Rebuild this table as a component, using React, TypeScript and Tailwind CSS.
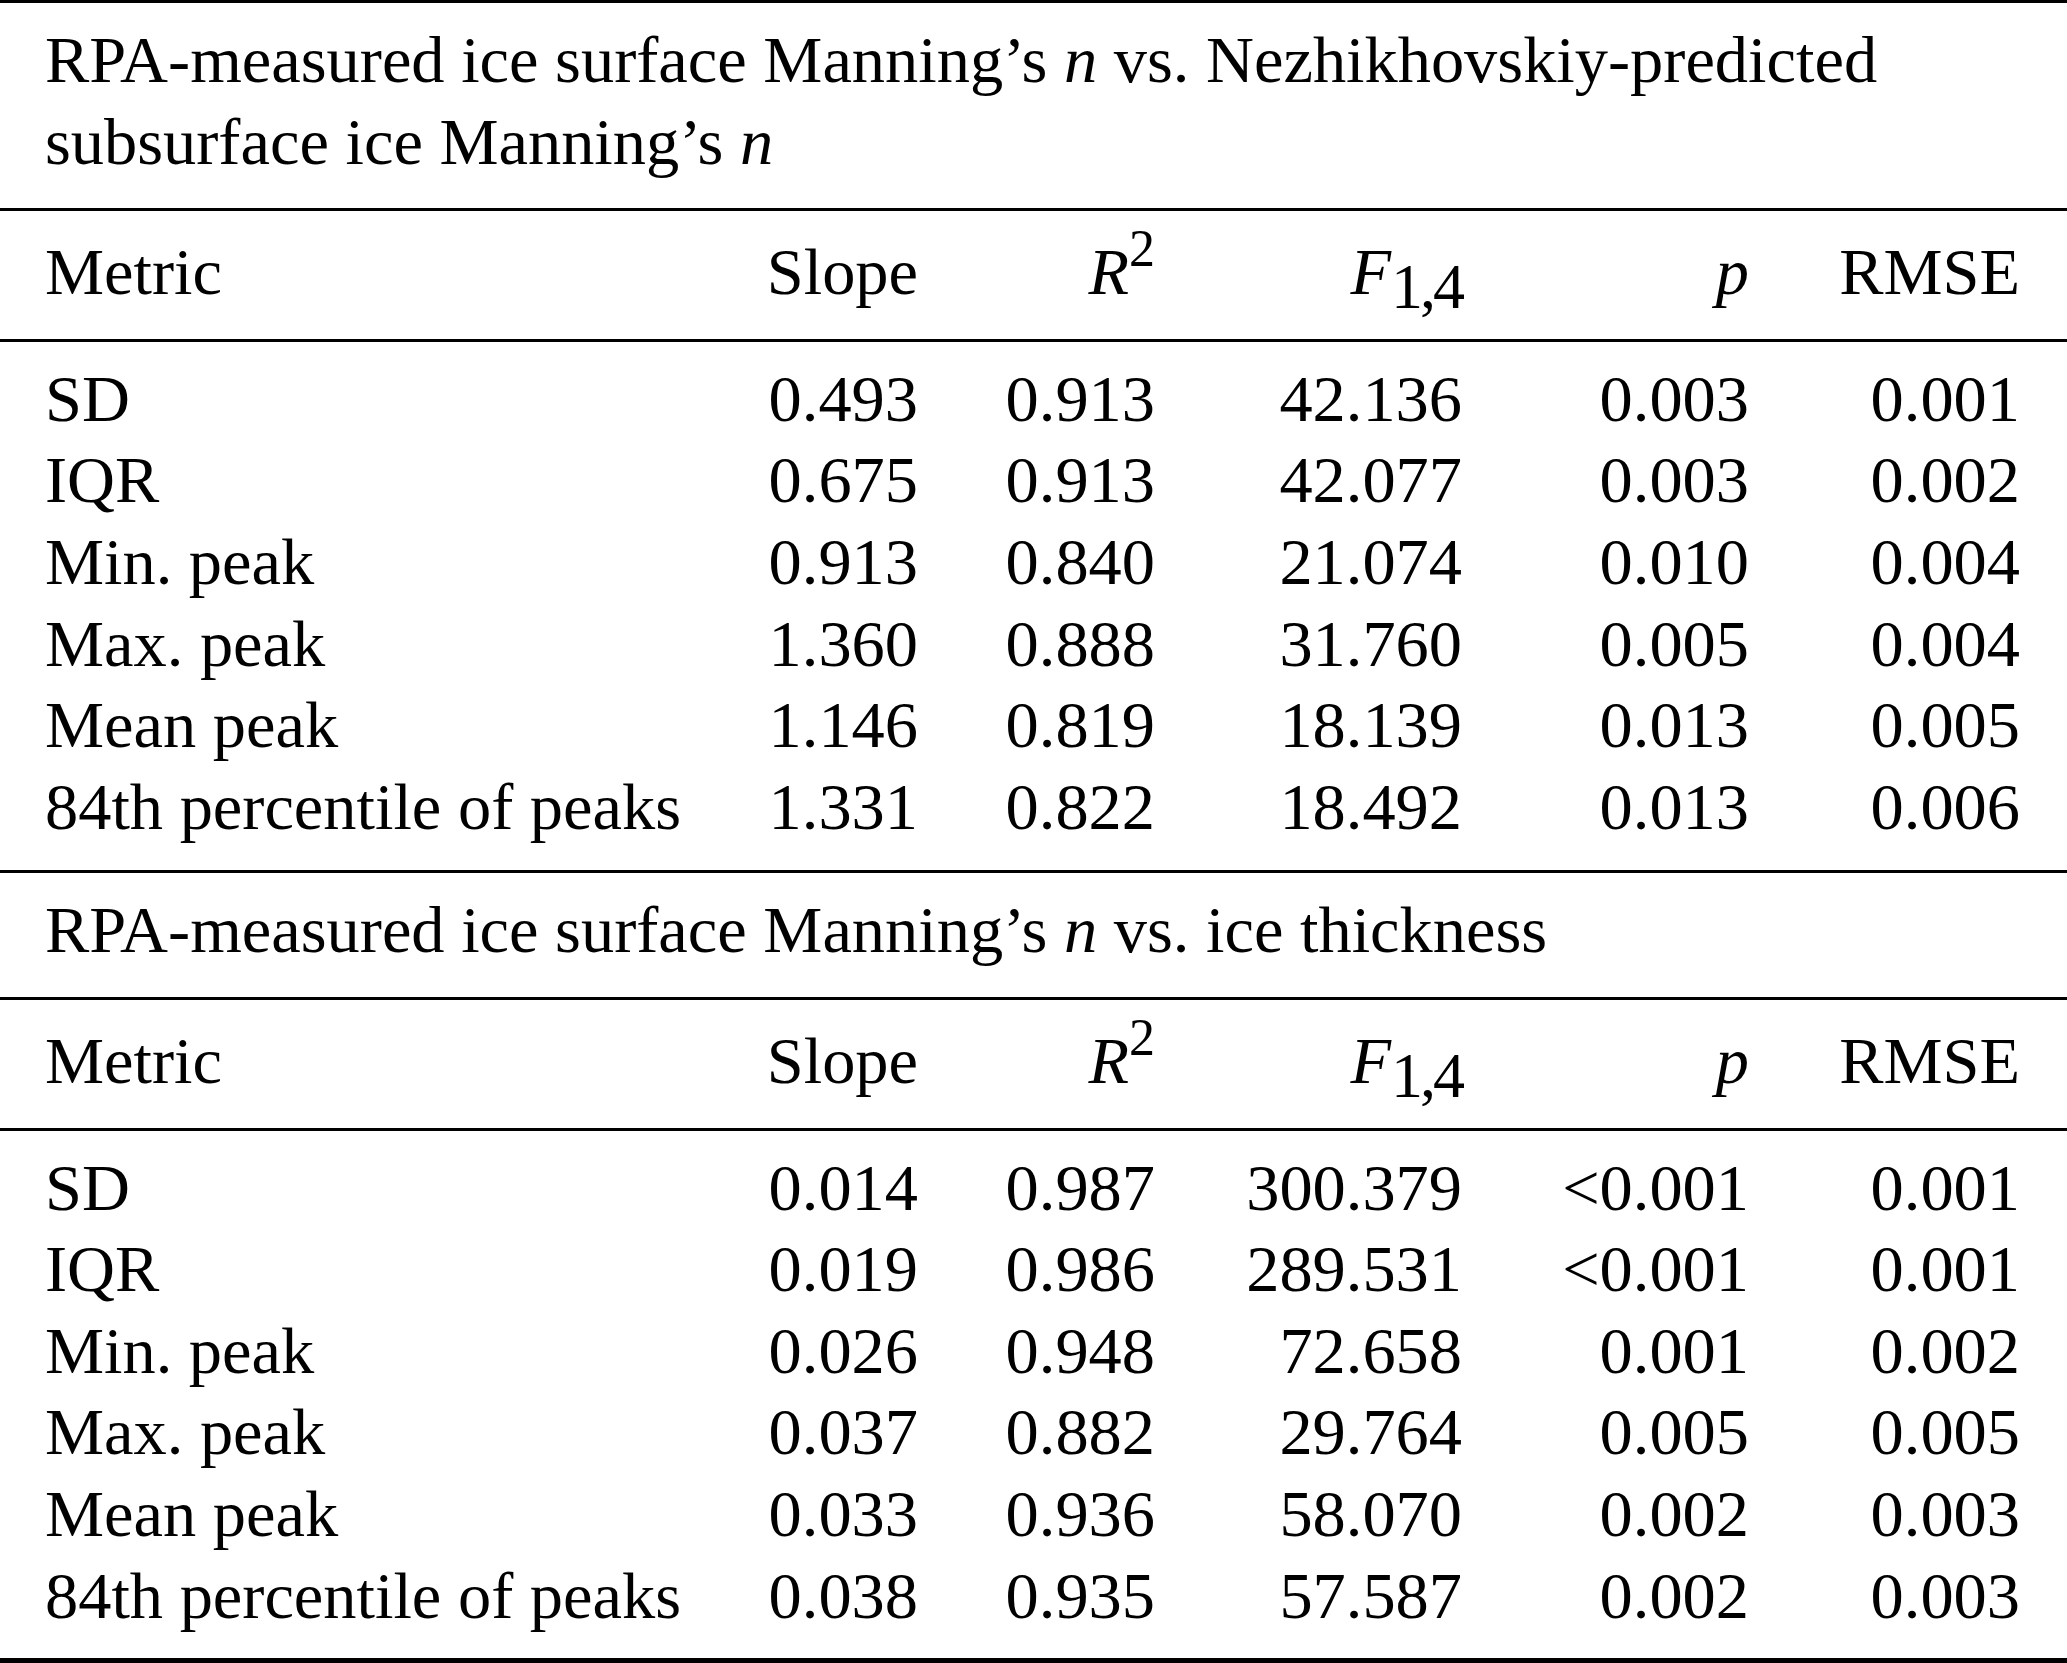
import React from 'react';

type Row = [string, string, string, string, string, string];

// Two regression blocks, same columns
const sections: { title: React.ReactNode; rows: Row[] }[] = [
  {
    title: (
      <>
        RPA-measured ice surface Manning’s <i>n</i> vs. Nezhikhovskiy-predicted
        <br />
        subsurface ice Manning’s <i>n</i>
      </>
    ),
    rows: [
      ['SD', '0.493', '0.913', '42.136', '0.003', '0.001'],
      ['IQR', '0.675', '0.913', '42.077', '0.003', '0.002'],
      ['Min. peak', '0.913', '0.840', '21.074', '0.010', '0.004'],
      ['Max. peak', '1.360', '0.888', '31.760', '0.005', '0.004'],
      ['Mean peak', '1.146', '0.819', '18.139', '0.013', '0.005'],
      ['84th percentile of peaks', '1.331', '0.822', '18.492', '0.013', '0.006'],
    ],
  },
  {
    title: (
      <>
        RPA-measured ice surface Manning’s <i>n</i> vs. ice thickness
      </>
    ),
    rows: [
      ['SD', '0.014', '0.987', '300.379', '<0.001', '0.001'],
      ['IQR', '0.019', '0.986', '289.531', '<0.001', '0.001'],
      ['Min. peak', '0.026', '0.948', '72.658', '0.001', '0.002'],
      ['Max. peak', '0.037', '0.882', '29.764', '0.005', '0.005'],
      ['Mean peak', '0.033', '0.936', '58.070', '0.002', '0.003'],
      ['84th percentile of peaks', '0.038', '0.935', '57.587', '0.002', '0.003'],
    ],
  },
];

const grid = 'grid grid-cols-[700px_173px_237px_307px_287px_271px]';

const Rule: React.FC<{ className?: string }> = ({ className = 'h-[3px]' }) => (
  <div className={`${className} bg-black`} />
);

const Header: React.FC = () => (
  <div className={`${grid} pt-[20px] pb-[26px]`}>
    <div>Metric</div>
    <div className="text-right">Slope</div>
    <div className="text-right">
      <i>R</i>
      <span className="text-[52px] leading-[0px] align-[28px]">2</span>
    </div>
    <div className="text-right">
      <i>F</i>
      <span className="text-[64px] tracking-[-3px] leading-[0px] align-[-14px]">1,4</span>
    </div>
    <div className="text-right">
      <i>p</i>
    </div>
    <div className="text-right">RMSE</div>
  </div>
);

const Body: React.FC<{ rows: Row[]; last?: boolean }> = ({ rows, last }) => (
  <div className={`pt-[16px] ${last ? 'pb-[22px]' : 'pb-[23px]'}`}>
    {rows.map((r) => (
      <div key={r[0]} className={grid}>
        <div>{r[0]}</div>
        {r.slice(1).map((v, i) => (
          <div key={i} className="text-right">
            {v}
          </div>
        ))}
      </div>
    ))}
  </div>
);

export default function App() {
  return (
    <div className="w-[2067px] bg-white text-black font-['Liberation_Serif','Times_New_Roman',serif] text-[66.4px] leading-[81.6px] whitespace-nowrap">
      <Rule />
      {sections.map((s, idx) => (
        <div key={idx}>
          <div className="pl-[45px] pr-[47px]">
            <div className="pt-[16px] pb-[26px]">{s.title}</div>
          </div>
          <Rule />
          <div className="pl-[45px] pr-[47px]">
            <Header />
          </div>
          <Rule />
          <div className="pl-[45px] pr-[47px]">
            <Body rows={s.rows} last={idx === sections.length - 1} />
          </div>
          <Rule className={idx === sections.length - 1 ? 'h-[5px]' : 'h-[3px]'} />
        </div>
      ))}
    </div>
  );
}
